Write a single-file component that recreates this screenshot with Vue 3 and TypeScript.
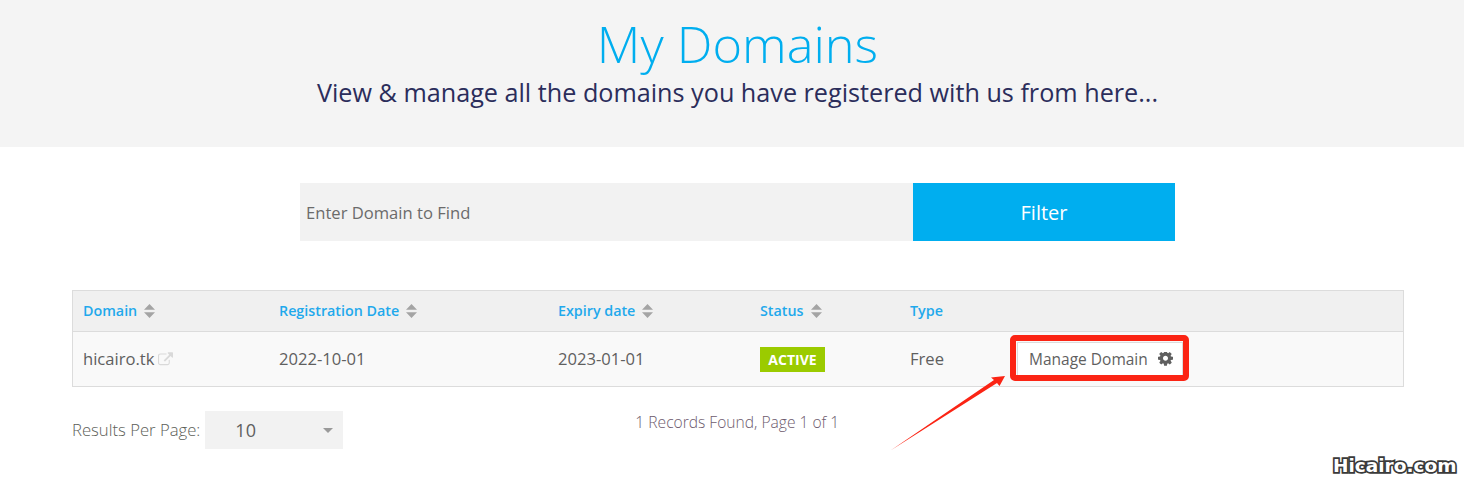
<script setup lang="ts">
interface Col { label: string; sortable: boolean }
const cols: Col[] = [
  { label: 'Domain', sortable: true },
  { label: 'Registration Date', sortable: true },
  { label: 'Expiry date', sortable: true },
  { label: 'Status', sortable: true },
  { label: 'Type', sortable: false },
  { label: '', sortable: false },
]
</script>

<template>
  <div class="page">
    <header class="hero">
      <h1>My Domains</h1>
      <p>View &amp; manage all the domains you have registered with us from here...</p>
    </header>

    <div class="filter">
      <div class="filter-input">Enter Domain to Find</div>
      <div class="filter-btn">Filter</div>
    </div>

    <div class="table">
      <div class="row head">
        <div v-for="c in cols" :key="c.label" class="cell">
          <span class="txt">{{ c.label }}</span>
          <svg v-if="c.sortable" class="sort" viewBox="0 0 11 14" width="11" height="14">
            <path d="M5.5 0 L11 5.8 H0 Z M0 8.2 H11 L5.5 14 Z" fill="#a4a4a4" />
          </svg>
        </div>
      </div>
      <div class="row body">
        <div class="cell">
          <span class="txt">hicairo.tk</span>
          <svg class="ext" viewBox="0 0 1792 1600" width="15" height="14">
            <path fill="#d9d9d9" d="M1408 928v320q0 119-84.5 203.5t-203.5 84.5h-832q-119 0-203.5-84.5t-84.5-203.5v-832q0-119 84.5-203.5t203.5-84.5h704q14 0 23 9t9 23v64q0 14-9 23t-23 9h-704q-66 0-113 47t-47 113v832q0 66 47 113t113 47h832q66 0 113-47t47-113v-320q0-14 9-23t23-9h64q14 0 23 9t9 23zm384-864v512q0 26-19 45t-45 19-45-19l-176-176-652 652q-10 10-23 10t-23-10l-114-114q-10-10-10-23t10-23l652-652-176-176q-19-19-19-45t19-45 45-19h512q26 0 45 19t19 45z" />
          </svg>
        </div>
        <div class="cell"><span class="txt">2022-10-01</span></div>
        <div class="cell"><span class="txt">2023-01-01</span></div>
        <div class="cell"><span class="badge">ACTIVE</span></div>
        <div class="cell"><span class="txt">Free</span></div>
        <div class="cell">
          <div class="manage">
            <span>Manage Domain</span>
            <svg class="cog" viewBox="0 0 1536 1536" width="15" height="15">
              <path fill="#5f5f5f" d="M1024 640q0-106-75-181t-181-75-181 75-75 181 75 181 181 75 181-75 75-181zm512-109v222q0 12-8 23t-20 13l-185 28q-19 54-39 91 35 50 107 138 10 12 10 25t-9 23q-27 37-99 108t-94 71q-12 0-26-9l-138-108q-44 23-91 38-16 136-29 186-7 28-36 28h-222q-14 0-24.5-8.5t-11.5-21.5l-28-184q-49-16-90-37l-141 107q-10 9-25 9-14 0-25-11-126-114-165-168-7-10-7-23 0-12 8-23 15-21 51-66.5t54-70.5q-27-50-41-99l-183-27q-13-2-21-12.5t-8-23.5v-222q0-12 8-23t19-13l186-28q14-46 39-92-40-57-107-138-10-12-10-24 0-10 9-23 26-36 98.5-107.5t94.5-71.5q13 0 26 10l138 107q44-23 91-38 16-136 29-186 7-28 36-28h222q14 0 24.5 8.5t11.5 21.5l28 184q49 16 90 37l142-107q9-9 24-9 13 0 25 10 129 119 165 170 7 8 7 22 0 12-8 23-15 21-51 66.5t-54 70.5q26 50 41 98l183 28q13 2 21 12.5t8 23.5z" />
            </svg>
          </div>
        </div>
      </div>
    </div>

    <div class="foot">
      <div class="per-page">
        <span class="txt">Results Per Page:</span>
        <div class="select"><span>10</span><i class="caret"></i></div>
      </div>
      <div class="records">1 Records Found, Page 1 of 1</div>
    </div>

    <div class="highlight"></div>
    <svg class="arrow" viewBox="0 0 120 80" width="120" height="80">
      <path d="M0.5 75.5 L104 5 L101 2.5 L115 1 L109.5 11 L107 8 Z" fill="#fb2414" />
    </svg>
    <div class="watermark">Hicairo.com</div>
  </div>
</template>

<style>
html, body { margin: 0; background: #fff; }
</style>

<style scoped>
.page {
  position: relative;
  width: 1464px;
  height: 484px;
  overflow: hidden;
  background: #fff;
  font-family: "Open Sans", sans-serif;
  color: #5f5f5f;
}
.hero {
  box-sizing: border-box;
  height: 147px;
  padding: 12px 0 0 11px;
  background: #f4f4f4;
  text-align: center;
}
.hero h1 {
  margin: 0;
  font-size: 50.5px;
  line-height: 64px;
  font-weight: 300;
  color: #00aeef;
}
.hero p {
  margin: 0;
  font-size: 25.2px;
  line-height: 32px;
  color: #2b2d5b;
}
.filter {
  display: flex;
  width: 875px;
  height: 58px;
  margin: 36px 0 0 300px;
}
.filter-input {
  flex: 1;
  display: flex;
  align-items: center;
  padding-left: 6px;
  background: #f2f2f2;
  font-size: 16.6px;
  color: #6b6b6b;
}
.filter-btn {
  display: flex;
  align-items: center;
  justify-content: center;
  width: 262px;
  background: #00aeef;
  color: #fff;
  font-size: 20px;
  font-weight: 500;
}
.table {
  width: 1332px;
  box-sizing: border-box;
  margin: 49px 0 0 72px;
  border: 1px solid #dcdcdc;
  background: #f9f9f9;
}
.row {
  display: grid;
  grid-template-columns: 196px 279px 202px 150px 106px 1fr;
}
.cell {
  display: flex;
  align-items: center;
  gap: 7px;
  padding-left: 10px;
}
.txt { padding-bottom: 2px; }
.head {
  height: 40px;
  background: #f0f0f0;
  border-bottom: 1px solid #dcdcdc;
  color: #1fa9ec;
  font-size: 14.3px;
  font-weight: 600;
}
.body {
  height: 54px;
  font-size: 16.6px;
  color: #5f5f5f;
}
.ext { margin-left: -3px; }
.badge {
  display: flex;
  align-items: center;
  justify-content: center;
  width: 65px;
  height: 25px;
  background: #9bcb00;
  color: #fff;
  font-size: 14px;
  font-weight: 700;
}
.manage {
  display: flex;
  align-items: center;
  gap: 10px;
  box-sizing: border-box;
  width: 166px;
  height: 34px;
  margin-left: 1px;
  padding-left: 11px;
  background: #fff;
  border: 1px solid #dcdcdc;
  font-size: 15.5px;
}
.cog { margin-top: 1px; }
.foot {
  position: relative;
  display: flex;
  margin: 24px 0 0 72px;
}
.per-page {
  display: flex;
  align-items: center;
  gap: 5px;
  font-size: 16.7px;
  font-weight: 300;
  color: #5c6058;
}
.select {
  position: relative;
  box-sizing: border-box;
  display: flex;
  align-items: center;
  width: 138px;
  height: 38px;
  padding-left: 30px;
  background: #f2f2f2;
  font-size: 18px;
  font-weight: 400;
  color: #5f5f5f;
}
.caret {
  position: absolute;
  right: 10px;
  top: 17px;
  border-left: 5.5px solid transparent;
  border-right: 5.5px solid transparent;
  border-top: 5.5px solid #9a9a9a;
}
.records {
  margin: 0 0 0 292px;
  font-size: 15.6px;
  line-height: 22px;
  font-weight: 300;
  color: #6d5a6d;
}
.highlight {
  position: absolute;
  left: 1010px;
  top: 335px;
  width: 179px;
  height: 46px;
  box-sizing: border-box;
  border: 6px solid #fb2414;
  border-radius: 5px;
}
.arrow {
  position: absolute;
  left: 890px;
  top: 375px;
}
.watermark {
  position: absolute;
  left: 1333px;
  top: 454px;
  font-family: "DejaVu Sans", sans-serif;
  font-size: 18.5px;
  line-height: 24px;
  font-weight: 700;
  color: #fff;
  -webkit-text-stroke: 3.5px #3a3a3a;
  paint-order: stroke fill;
}
</style>
